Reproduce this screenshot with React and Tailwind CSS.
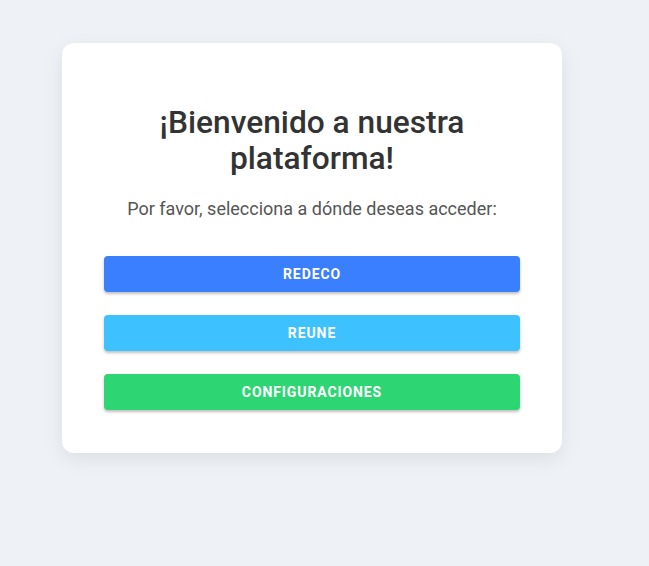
export default function App() {
  const btns = [
    { label: "REDECO", cls: "bg-[#3a7fff]" },
    { label: "REUNE", cls: "bg-[#3ec1ff]" },
    { label: "CONFIGURACIONES", cls: "bg-[#2ed573]" },
  ];
  return (
    <div className="min-h-[566px] w-full bg-[#eef2f7] pt-[43px] pl-[62px]" style={{ fontFamily: "Roboto, 'Liberation Sans', sans-serif" }}>
      <div className="w-[500px] rounded-[12px] bg-white px-[42px] pt-[40px] pb-[43px] shadow-[0_6px_20px_rgba(0,0,0,0.08)]">
        <h1 className="mx-auto mt-[22px] w-[330px] text-center text-[31.7px] leading-[36px] font-medium text-[#333333]">
          ¡Bienvenido a nuestra plataforma!
        </h1>
        <p className="mt-[21px] text-center text-[18px] leading-[21px] text-[#555555]">
          Por favor, selecciona a dónde deseas acceder:
        </p>
        <div className="mt-[37px] flex flex-col gap-[23px]">
          {btns.map((b) => (
            <button
              key={b.label}
              className={`h-[36px] w-full rounded-[4px] ${b.cls} text-[14px] font-bold tracking-[0.9px] text-white shadow-[0_2px_3px_rgba(0,0,0,0.25)]`}
            >
              {b.label}
            </button>
          ))}
        </div>
      </div>
    </div>
  );
}
